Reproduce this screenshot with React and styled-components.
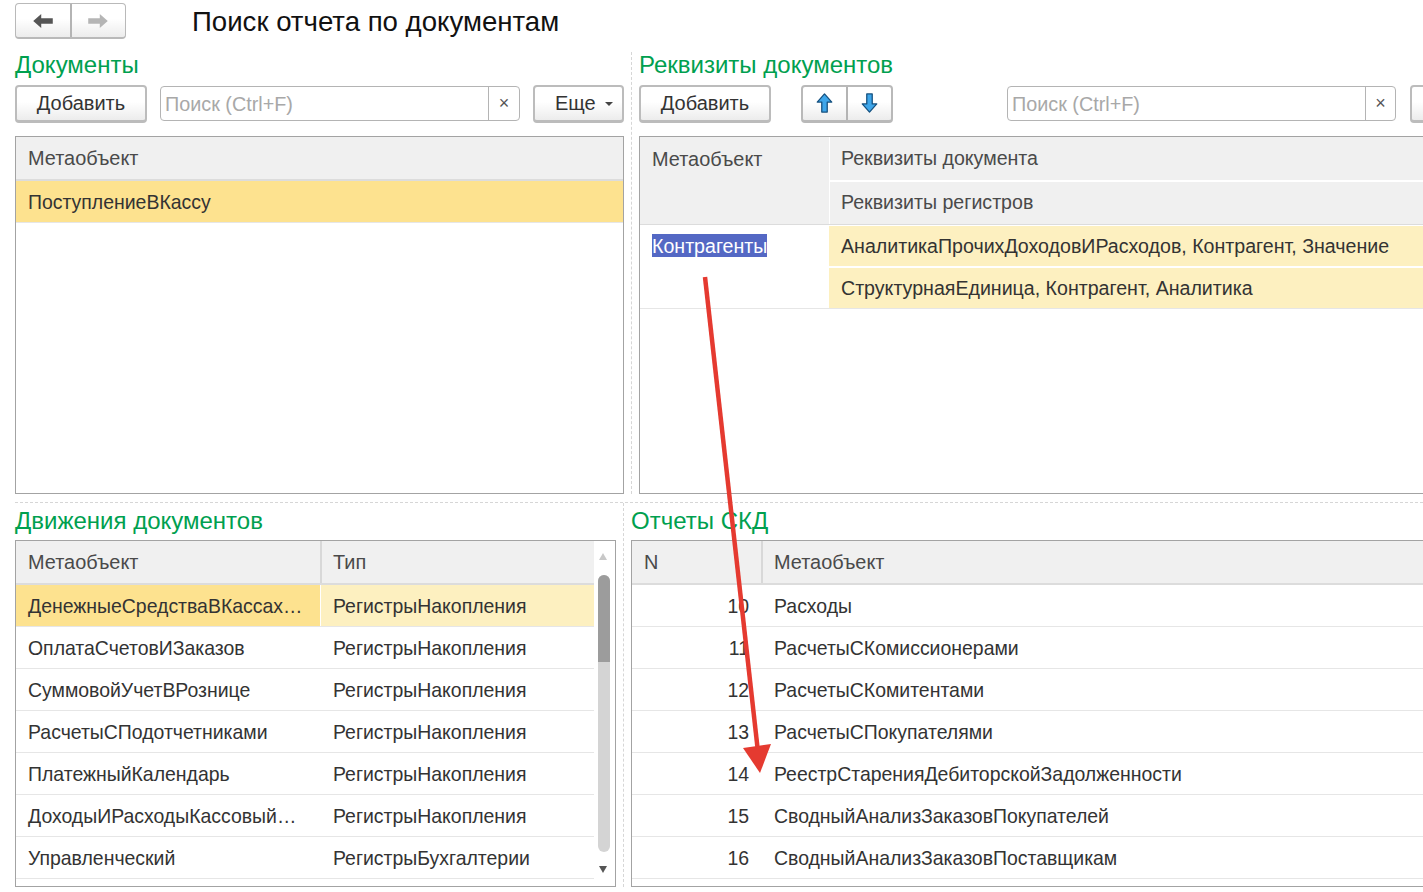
import React from 'react'
import { styled, createGlobalStyle } from 'styled-components'

const GlobalStyle = createGlobalStyle`
  html, body {
    margin: 0;
    padding: 0;
    background: #fff;
    overflow: hidden;
  }
  * { box-sizing: border-box; }
`

const Page = styled.div`
  position: relative;
  width: 1423px;
  height: 892px;
  padding: 3px 0 0 15px;
  overflow: hidden;
  background: #fff;
  color: #333;
  font-family: "Liberation Sans", Arial, sans-serif;
  font-size: 20px;
`

const TopBar = styled.header`
  display: flex;
  align-items: center;
  height: 36px;
  margin-bottom: 13px;
`

const NavGroup = styled.div`
  display: flex;
  width: ${p => p.$width}px;
  height: ${p => p.$height || 36}px;
  margin-left: ${p => p.$ml || 0}px;
  flex: none;
  border: ${p => p.$heavy ? 2 : 1}px solid #b9b9b9;
  border-bottom-width: ${p => p.$heavy ? 3 : 2}px;
  border-radius: 4px;
  background: linear-gradient(#fff 45%, #ececec);
`

const NavButton = styled.div`
  flex: 1;
  display: flex;
  align-items: center;
  justify-content: center;
  & + & {
    border-left: ${p => p.$heavy ? 2 : 1}px solid ${p => p.$heavy ? '#b4b4b4' : '#d4d4d4'};
  }
`

const Title = styled.h1`
  margin: 0 0 0 66px;
  padding-top: 2px;
  font-size: 27.6px;
  font-weight: 400;
  color: #111;
  white-space: nowrap;
`

const Split = styled.div`
  display: flex;
  height: ${p => p.$height}px;
`

const Panel = styled.section`
  width: ${p => p.$width}px;
  flex: none;
`

const VDivider = styled.div`
  width: ${p => p.$width}px;
  flex: none;
  display: flex;
  justify-content: center;
  &::before {
    content: '';
    border-left: 1px dashed #d6d6d6;
  }
`

const HDivider = styled.div`
  margin: 8px 0 0;
  border-top: 1px dashed #d6d6d6;
`

const Heading = styled.h2`
  display: flex;
  align-items: center;
  height: ${p => p.$height}px;
  margin: 0;
  padding-bottom: ${p => p.$pb}px;
  font-size: 24px;
  font-weight: 400;
  color: #00a04f;
  white-space: nowrap;
`

const Toolbar = styled.div`
  display: flex;
  align-items: center;
  height: 37px;
  margin-bottom: 14px;
`

const Button = styled.button`
  width: ${p => p.$width}px;
  height: 38px;
  flex: none;
  margin-left: ${p => p.$ml || 0}px;
  padding: 0;
  border: 2px solid #bcbcbc;
  border-bottom-width: 3px;
  border-radius: 4px;
  background: linear-gradient(#fff 45%, #ececec);
  color: #333;
  font: inherit;
`

const MoreButton = styled(Button)`
  padding-left: 20px;
  text-align: left;
`

const Caret = styled.span`
  display: inline-block;
  margin-left: 9px;
  vertical-align: middle;
  border-left: 4px solid transparent;
  border-right: 4px solid transparent;
  border-top: 4px solid #444;
`

const Search = styled.div`
  display: flex;
  width: ${p => p.$width}px;
  height: 35px;
  flex: none;
  margin-left: ${p => p.$ml}px;
  border: 1px solid #b4b4b4;
  border-radius: 4px;
  background: #fff;
`

const SearchText = styled.div`
  flex: 1;
  padding-left: 4px;
  line-height: 35px;
  font-size: 19.8px;
  color: #a8a8a8;
`

const SearchClear = styled.div`
  width: ${p => p.$width || 31}px;
  flex: none;
  border-left: 1px solid #b4b4b4;
  text-align: center;
  line-height: 32px;
  font-size: 18px;
  color: #555;
`

const Table = styled.div`
  position: relative;
  height: ${p => p.$height}px;
  border: 1px solid #a3a3a3;
  ${p => p.$open && 'border-right: 0;'}
  overflow: hidden;
  font-size: 19.6px;
`

const Row = styled.div`
  display: grid;
  grid-template-columns: ${p => p.$columns};
  grid-template-rows: 100%;
  column-gap: ${p => p.$head ? 0 : 1}px;
  height: ${p => p.$height || 42}px;
  border-bottom: ${p => p.$head ? '2px solid #dcdcdc' : '1px solid #e6e6e6'};
`

const HeadCell = styled.div`
  display: flex;
  align-items: ${p => p.$top ? 'flex-start' : 'center'};
  padding: ${p => p.$top ? '11px' : '0'} 12px 0;
  background: #f0f0f0;
  color: #4a4a4a;
  font-size: 19.9px;
  white-space: nowrap;
  & + & {
    border-left: 2px solid #d8d8d8;
    padding-left: 11px;
  }
`

const Cell = styled.div`
  padding: 0 12px;
  font-size: 19.45px;
  line-height: 43px;
  white-space: nowrap;
  overflow: hidden;
  text-overflow: ellipsis;
  text-align: ${p => p.$right ? 'right' : 'left'};
  background: ${p => p.$tone === 'strong' ? '#fde28f' : p.$tone === 'soft' ? '#fdf0c0' : 'transparent'};
`

const GroupHead = styled.div`
  display: grid;
  grid-template-columns: 189px 1fr;
  height: 88px;
  border-bottom: 1px solid #dcdcdc;
`

const GroupStack = styled.div`
  display: flex;
  flex-direction: column;
  gap: 2px;
  border-left: 1px solid #fff;
`

const GroupLine = styled.div`
  flex: 1;
  display: flex;
  align-items: center;
  padding-left: 11px;
  background: #f0f0f0;
  color: #4a4a4a;
`

const GroupBody = styled.div`
  display: grid;
  grid-template-columns: 189px 1fr;
  height: 84px;
  border-bottom: 1px solid #e6e6e6;
`

const GroupName = styled.div`
  padding: 9px 12px 0;
`

const Selected = styled.span`
  display: inline-block;
  height: 23px;
  line-height: 25px;
  overflow: hidden;
  background: #5468c4;
  color: #fff;
`

const GroupValues = styled.div`
  display: flex;
  flex-direction: column;
  gap: 2px;
  padding-top: 1px;
`

const GroupValue = styled.div`
  flex: 1;
  padding-left: 12px;
  line-height: 40px;
  background: #fdf0c0;
  white-space: nowrap;
`

const ScrollTrack = styled.div`
  position: absolute;
  top: 0;
  right: 0;
  bottom: 0;
  width: 21px;
  background: #fff;
`

const ScrollThumb = styled.div`
  position: absolute;
  top: 34px;
  left: 4px;
  width: 12px;
  height: 277px;
  border-radius: 6px;
  overflow: hidden;
  background: #d4d4d4;
  &::before {
    content: '';
    display: block;
    height: 87px;
    background: #9c9c9c;
  }
`

const ScrollArrow = styled.span`
  position: absolute;
  left: 5px;
  ${p => p.$up ? 'top: 12px;' : 'bottom: 13px;'}
  border-left: 4px solid transparent;
  border-right: 4px solid transparent;
  ${p => p.$up ? 'border-bottom: 7px solid #c8c8c8;' : 'border-top: 7px solid #555;'}
`

const ArrowOverlay = styled.svg`
  position: absolute;
  top: 0;
  left: 0;
  pointer-events: none;
`

const HorizontalArrow = ({ dir, color }) => (
  <svg width="22" height="16" viewBox="0 0 24 18">
    <path
      d={dir === 'left' ? 'M1 9 10 1V6H23V12H10V17Z' : 'M23 9 14 1V6H1V12H14V17Z'}
      fill={color}
    />
  </svg>
)

const BlueArrow = ({ down }) => (
  <svg width="17" height="20" viewBox="0 0 18 22">
    <path
      d={down ? 'M6 1H12V12H17L9 21 1 12H6Z' : 'M6 21H12V10H17L9 1 1 10H6Z'}
      fill="#3ea6ea"
      stroke="#14507f"
      strokeWidth="1.4"
      strokeLinejoin="round"
    />
  </svg>
)

const movements = [
  ['ДенежныеСредстваВКассахККМ', 'РегистрыНакопления'],
  ['ОплатаСчетовИЗаказов', 'РегистрыНакопления'],
  ['СуммовойУчетВРознице', 'РегистрыНакопления'],
  ['РасчетыСПодотчетниками', 'РегистрыНакопления'],
  ['ПлатежныйКалендарь', 'РегистрыНакопления'],
  ['ДоходыИРасходыКассовыйМетод', 'РегистрыНакопления'],
  ['Управленческий', 'РегистрыБухгалтерии'],
]

const reports = [
  [10, 'Расходы'],
  [11, 'РасчетыСКомиссионерами'],
  [12, 'РасчетыСКомитентами'],
  [13, 'РасчетыСПокупателями'],
  [14, 'РеестрСтаренияДебиторскойЗадолженности'],
  [15, 'СводныйАнализЗаказовПокупателей'],
  [16, 'СводныйАнализЗаказовПоставщикам'],
]

export default function App() {
  return (
    <Page>
      <GlobalStyle />
      <TopBar>
        <NavGroup $width={111}>
          <NavButton><HorizontalArrow dir="left" color="#555" /></NavButton>
          <NavButton><HorizontalArrow dir="right" color="#b5b5b5" /></NavButton>
        </NavGroup>
        <Title>Поиск отчета по документам</Title>
      </TopBar>

      <Split $height={442}>
        <Panel $width={609}>
          <Heading $height={33} $pb={8}>Документы</Heading>
          <Toolbar>
            <Button $width={132}>Добавить</Button>
            <Search $width={360} $ml={13}>
              <SearchText>Поиск (Ctrl+F)</SearchText>
              <SearchClear>×</SearchClear>
            </Search>
            <MoreButton $width={91} $ml={13}>Еще<Caret /></MoreButton>
          </Toolbar>
          <Table $height={358}>
            <Row $head $columns="1fr" $height={44}>
              <HeadCell>Метаобъект</HeadCell>
            </Row>
            <Row $columns="1fr">
              <Cell $tone="strong">ПоступлениеВКассу</Cell>
            </Row>
          </Table>
        </Panel>
        <VDivider $width={15} />
        <Panel $width={800}>
          <Heading $height={33} $pb={8}>Реквизиты документов</Heading>
          <Toolbar>
            <Button $width={132}>Добавить</Button>
            <NavGroup $width={92} $height={38} $ml={30} $heavy>
              <NavButton $heavy><BlueArrow /></NavButton>
              <NavButton $heavy><BlueArrow down /></NavButton>
            </NavGroup>
            <Search $width={389} $ml={114}>
              <SearchText>Поиск (Ctrl+F)</SearchText>
              <SearchClear $width={30}>×</SearchClear>
            </Search>
            <Button $width={60} $ml={14} />
          </Toolbar>
          <Table $height={358} $open>
            <GroupHead>
              <HeadCell $top>Метаобъект</HeadCell>
              <GroupStack>
                <GroupLine>Реквизиты документа</GroupLine>
                <GroupLine>Реквизиты регистров</GroupLine>
              </GroupStack>
            </GroupHead>
            <GroupBody>
              <GroupName><Selected>Контрагенты</Selected></GroupName>
              <GroupValues>
                <GroupValue>АналитикаПрочихДоходовИРасходов, Контрагент, Значение</GroupValue>
                <GroupValue>СтруктурнаяЕдиница, Контрагент, Аналитика</GroupValue>
              </GroupValues>
            </GroupBody>
          </Table>
        </Panel>
      </Split>

      <HDivider />

      <Split $height={384}>
        <Panel $width={601}>
          <Heading $height={37} $pb={2}>Движения документов</Heading>
          <Table $height={347}>
            <Row $head $columns="304px 275px 22px" $height={44}>
              <HeadCell>Метаобъект</HeadCell>
              <HeadCell>Тип</HeadCell>
            </Row>
            {movements.map(([name, type], i) => (
              <Row key={name} $columns="304px 274px 22px">
                <Cell $tone={i === 0 ? 'strong' : undefined}>{name}</Cell>
                <Cell $tone={i === 0 ? 'soft' : undefined}>{type}</Cell>
              </Row>
            ))}
            <Row $columns="304px 274px 22px" />
            <ScrollTrack>
              <ScrollArrow $up />
              <ScrollThumb />
              <ScrollArrow />
            </ScrollTrack>
          </Table>
        </Panel>
        <VDivider $width={15} />
        <Panel $width={800}>
          <Heading $height={37} $pb={2}>Отчеты СКД</Heading>
          <Table $height={347} $open>
            <Row $head $columns="129px 1fr" $height={44}>
              <HeadCell>N</HeadCell>
              <HeadCell>Метаобъект</HeadCell>
            </Row>
            {reports.map(([n, name]) => (
              <Row key={n} $columns="129px 1fr">
                <Cell $right>{n}</Cell>
                <Cell>{name}</Cell>
              </Row>
            ))}
            <Row $columns="129px 1fr" />
          </Table>
        </Panel>
      </Split>

      <ArrowOverlay width="1423" height="892" viewBox="0 0 1423 892">
        <path d="M705 277 758 752" stroke="#e53a30" strokeWidth="4.5" fill="none" />
        <path d="M743 748 771 744 760 773Z" fill="#e53a30" />
      </ArrowOverlay>
    </Page>
  )
}
